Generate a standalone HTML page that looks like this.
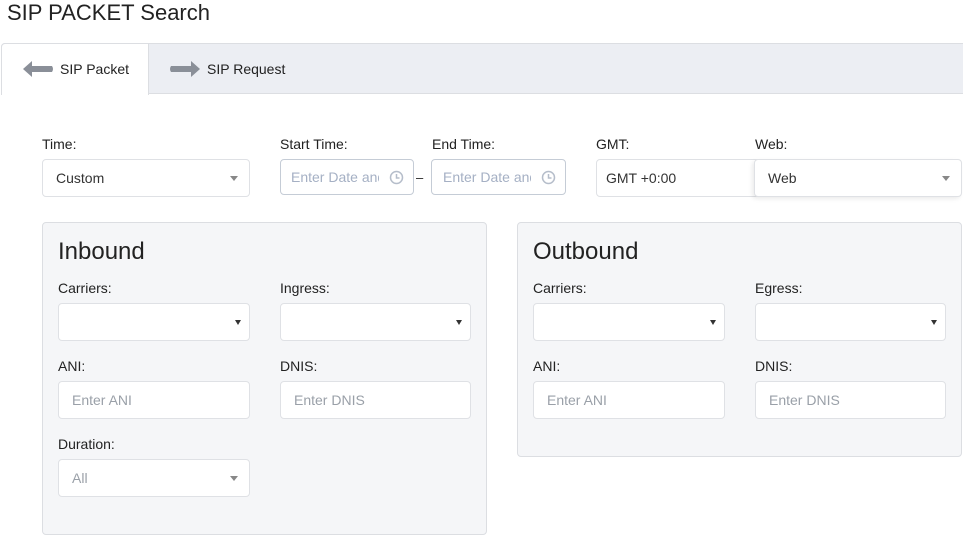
<!DOCTYPE html>
<html><head><style>
*{box-sizing:border-box;margin:0;padding:0}
body{width:963px;height:538px;overflow:hidden;background:#fff;font-family:"Liberation Sans",sans-serif;color:#222;position:relative}
.a{position:absolute}
.lbl{position:absolute;font-size:14px;color:#222}
.box{position:absolute;background:#fff;border:1px solid #dfe1e5;border-radius:4px;font-size:14px;padding-left:13px;display:flex;align-items:center;color:#333}
.ph{color:#9aa0a8}
.car{position:absolute;right:11px;top:50%;margin-top:-2px;width:0;height:0;border-left:4px solid transparent;border-right:4px solid transparent;border-top:5px solid #888}
.car2{position:absolute;right:8px;top:50%;margin-top:-2px;width:0;height:0;border-left:3.5px solid transparent;border-right:3.5px solid transparent;border-top:5px solid #333}
.panel{position:absolute;background:#f5f6f8;border:1px solid #dcdee2;border-radius:4px}
.h{position:absolute;font-size:24px;color:#222}
.dt{position:absolute;left:10px;top:9px;width:88px;overflow:hidden;white-space:nowrap;color:#a5b0c4}
</style></head><body>
<div class="a" style="left:7px;top:0;font-size:22px;color:#222">SIP PACKET Search</div>
<div class="a" style="left:1px;top:43px;width:970px;height:51px;background:#eceef3;border:1px solid #dcdee2;border-radius:4px 0 0 0"></div>
<div class="a" style="left:1px;top:43px;width:148px;height:52px;background:#fff;border:1px solid #dcdee2;border-bottom:none;border-radius:4px 0 0 0"></div>
<svg class="a" style="left:22px;top:60px" width="32" height="18"><path d="M1 9 L10 1 L10 6 L30 6 Q32 9 30 12 L10 12 L10 17 Z" fill="#8a8f98"/></svg>
<div class="a" style="left:60px;top:61px;font-size:14px">SIP Packet</div>
<svg class="a" style="left:169px;top:60px" width="32" height="18"><path d="M31 9 L22 1 L22 6 L2 6 Q0 9 2 12 L22 12 L22 17 Z" fill="#8a8f98"/></svg>
<div class="a" style="left:207px;top:61px;font-size:14px">SIP Request</div>

<div class="lbl" style="left:42px;top:136px">Time:</div>
<div class="box" style="left:42px;top:159px;width:208px;height:38px">Custom<span class="car"></span></div>
<div class="lbl" style="left:280px;top:136px">Start Time:</div>
<div class="box" style="left:280px;top:159px;width:134px;height:36px;border-color:#c5ccd6"><span class="dt">Enter Date and</span><svg class="a" style="right:9px;top:10px" width="15" height="15"><circle cx="7.5" cy="7.5" r="6" fill="none" stroke="#b5bdca" stroke-width="1.5"/><path d="M7.5 4v4h3" fill="none" stroke="#b5bdca" stroke-width="1.5"/></svg></div>
<div class="a" style="left:416px;top:170px;font-size:13px">–</div>
<div class="lbl" style="left:432px;top:136px">End Time:</div>
<div class="box" style="left:431px;top:159px;width:135px;height:36px;border-color:#c5ccd6"><span class="dt" style="left:11px">Enter Date and</span><svg class="a" style="right:9px;top:10px" width="15" height="15"><circle cx="7.5" cy="7.5" r="6" fill="none" stroke="#b5bdca" stroke-width="1.5"/><path d="M7.5 4v4h3" fill="none" stroke="#b5bdca" stroke-width="1.5"/></svg></div>
<div class="lbl" style="left:596px;top:136px">GMT:</div>
<div class="box" style="left:596px;top:159px;width:180px;height:38px;padding-left:9px">GMT +0:00</div>
<div class="lbl" style="left:755px;top:136px">Web:</div>
<div class="box" style="left:754px;top:159px;width:208px;height:38px;box-shadow:-2px 2px 4px rgba(0,0,0,.08)">Web<span class="car"></span></div>

<div class="panel" style="left:42px;top:222px;width:445px;height:313px"></div>
<div class="h" style="left:58px;top:238px">Inbound</div>
<div class="lbl" style="left:58px;top:280px">Carriers:</div>
<div class="box" style="left:58px;top:303px;width:192px;height:38px"><span class="car2"></span></div>
<div class="lbl" style="left:280px;top:280px">Ingress:</div>
<div class="box" style="left:280px;top:303px;width:191px;height:38px"><span class="car2"></span></div>
<div class="lbl" style="left:58px;top:358px">ANI:</div>
<div class="box ph" style="left:58px;top:381px;width:192px;height:38px">Enter ANI</div>
<div class="lbl" style="left:280px;top:358px">DNIS:</div>
<div class="box ph" style="left:280px;top:381px;width:191px;height:38px">Enter DNIS</div>
<div class="lbl" style="left:58px;top:436px">Duration:</div>
<div class="box ph" style="left:58px;top:459px;width:192px;height:38px">All<span class="car"></span></div>

<div class="panel" style="left:517px;top:222px;width:445px;height:235px"></div>
<div class="h" style="left:533px;top:238px">Outbound</div>
<div class="lbl" style="left:533px;top:280px">Carriers:</div>
<div class="box" style="left:533px;top:303px;width:192px;height:38px"><span class="car2"></span></div>
<div class="lbl" style="left:755px;top:280px">Egress:</div>
<div class="box" style="left:755px;top:303px;width:191px;height:38px"><span class="car2"></span></div>
<div class="lbl" style="left:533px;top:358px">ANI:</div>
<div class="box ph" style="left:533px;top:381px;width:192px;height:38px">Enter ANI</div>
<div class="lbl" style="left:755px;top:358px">DNIS:</div>
<div class="box ph" style="left:755px;top:381px;width:191px;height:38px">Enter DNIS</div>
</body></html>
